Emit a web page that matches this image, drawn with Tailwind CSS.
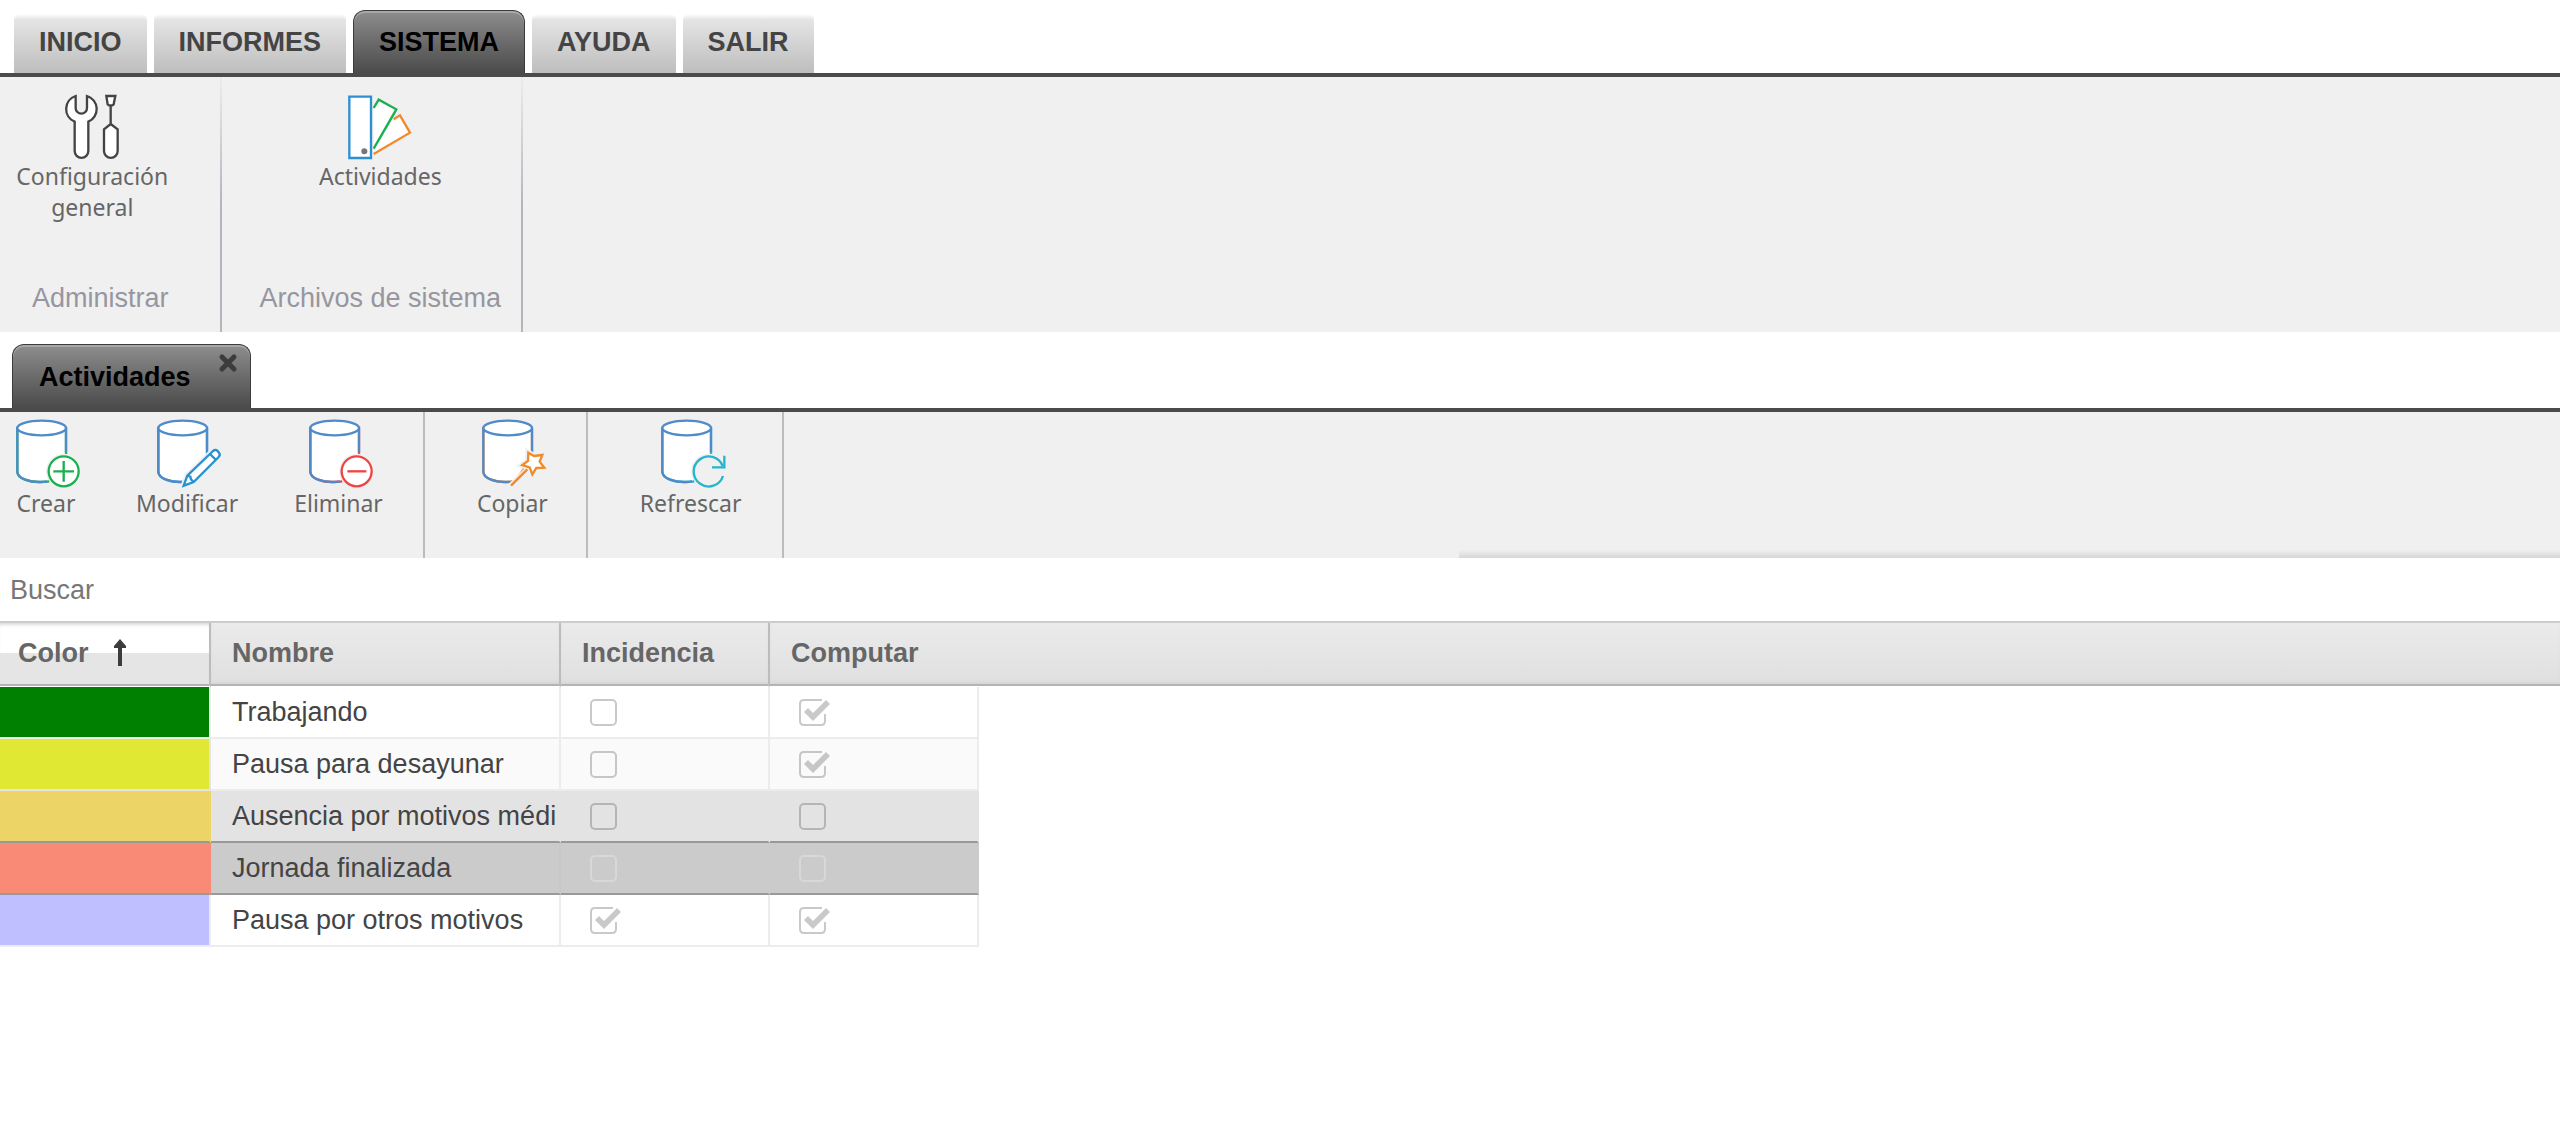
<!DOCTYPE html>
<html lang="es">

<head>
    <meta charset="UTF-8">
    <meta name="viewport" content="width=device-width, initial-scale=1.0">
    <title>Actividades</title>
    <script src="https://cdn.jsdelivr.net/npm/@tailwindcss/browser@4"></script>
</head>

<body class="bg-white font-['Liberation_Sans',Arial,sans-serif] text-[27px] leading-8 text-[#444]">

    <!-- shared icons -->
    <svg class="hidden" aria-hidden="true">
        <symbol id="cylinder" viewBox="0 0 204 204">
            <path d="M16 30V161C16 182 55 193 86 192L110 190L162 120V30Z" fill="#fff" />
            <path d="M16 30V161C16 180 50 193 86 192Q97 192 106 190M162 30V103" fill="none" stroke="#4f8ac9" stroke-width="7" />
            <ellipse cx="89" cy="30" rx="73" ry="22" fill="#fff" stroke="#4f8ac9" stroke-width="7" />
        </symbol>
        <symbol id="unchecked" viewBox="0 0 32 28">
            <rect x="1" y="1" width="25" height="25" rx="4" fill="none" stroke="currentColor" stroke-width="2" />
        </symbol>
        <symbol id="checked" viewBox="0 0 32 28">
            <path d="M23 1H5Q1 1 1 5V22Q1 26 5 26H22Q26 26 26 22V15" fill="none" stroke="currentColor" stroke-width="2" />
            <path d="M6 12L9 9L14 14L27 1L31 5L14 22L5 13Z" fill="currentColor" />
        </symbol>
    </svg>

    <!-- main menu -->
    <nav class="flex items-end gap-[7px] border-b-4 border-[#4b4b4b] pt-2.5 pl-3.5 font-bold">
        <button class="h-[59px] rounded-t-md bg-linear-to-b from-white via-[#e4e4e4] via-10% to-[#bebebe] px-[25px] pb-1">INICIO</button>
        <button class="h-[59px] rounded-t-md bg-linear-to-b from-white via-[#e4e4e4] via-10% to-[#bebebe] px-[25px] pb-1">INFORMES</button>
        <button class="h-[63px] rounded-t-xl border border-b-0 border-[#3c3c3c] bg-linear-to-b from-[#8e8e8e] to-[#4b4b4b] px-[25px] text-black shadow-[inset_0_2px_0_#a8a8a8]">SISTEMA</button>
        <button class="h-[59px] rounded-t-md bg-linear-to-b from-white via-[#e4e4e4] via-10% to-[#bebebe] px-[25px] pb-1">AYUDA</button>
        <button class="h-[59px] rounded-t-md bg-linear-to-b from-white via-[#e4e4e4] via-10% to-[#bebebe] px-[25px] pb-1">SALIR</button>
    </nav>

    <!-- ribbon -->
    <div class="flex h-[255px] bg-[#f0f0f0] text-[#666]">
        <section class="flex flex-col justify-between pt-3.5 pr-[51px] pb-[18px] pl-4">
            <button class="flex flex-col items-center gap-0.5 font-['Noto_Sans',sans-serif] text-[23px] leading-[31px]">
                <svg class="size-[68px] overflow-visible" viewBox="51 33 204 204" fill="#fff" stroke="#444" stroke-width="7">
                    <path d="M104 48V84A17 17 0 0 0 138 84V48A41 41 0 0 1 142 125V213A20 20 0 0 1 101 213V125A41 41 0 0 1 104 48Z" />
                    <path d="M196 48H223L218 73L214 76H204L200 73ZM209 76V132M209 132L230 148V213A20 20 0 0 1 189 213V148Z" />
                </svg>
                <span>Configuración<br>general</span>
            </button>
            <span class="pl-4 text-[#9696a0]">Administrar</span>
        </section>
        <div class="w-0.5 bg-linear-to-b from-[#ececf0] via-[#b4b6be] via-50% to-[#b4b6be]"></div>
        <section class="flex flex-col items-center justify-between pt-3.5 pr-[20px] pb-[18px] pl-[38px]">
            <button class="flex flex-col items-center gap-0.5 font-['Noto_Sans',sans-serif] text-[23px] leading-[31px]">
                <svg class="size-[68px] overflow-visible" viewBox="51 33 204 204" fill="#fff" stroke-width="7">
                    <path d="M194 118L213 106L243 158L134 222V206Z" stroke="none" />
                    <path d="M194 118L213 106L243 158L134 222" fill="none" stroke="#f08a2c" />
                    <path d="M134 84L149 59L202 88L134 206" stroke="#1bb04f" />
                    <path d="M61 50H126V234H61Z" stroke="#2e8fd0" />
                    <circle cx="106" cy="214" r="9" fill="#777" />
                </svg>
                <span>Actividades</span>
            </button>
            <span class="text-[#9696a0]">Archivos de sistema</span>
        </section>
        <div class="w-0.5 bg-linear-to-b from-[#ececf0] via-[#b4b6be] via-50% to-[#b4b6be]"></div>
    </div>

    <!-- open tabs -->
    <div class="flex items-end border-b-4 border-[#4b4b4b] pt-3 pl-3">
        <div class="flex h-16 items-start rounded-t-xl border border-b-0 border-[#3c3c3c] bg-linear-to-b from-[#8e8e8e] to-[#4b4b4b] pr-3 pl-[26px] font-bold text-black shadow-[inset_0_2px_0_#a8a8a8]">
            <a href="#" class="pt-4">Actividades</a>
            <button aria-label="Cerrar" class="pt-2 pl-[27px]">
                <svg class="size-5" viewBox="0 0 20 20" stroke="#3c3c3c" stroke-width="5" stroke-linecap="round">
                    <path d="M4 4L16 16M16 4L4 16" />
                </svg>
            </button>
        </div>
    </div>

    <!-- toolbar -->
    <div class="flex h-[146px] bg-[#f0f0f0] font-['Noto_Sans',sans-serif] text-[23px] leading-[31px] text-[#666]">
        <div class="flex items-start gap-14 border-r-2 border-[#bcbcbc] pt-1.5 pr-10 pl-3">
            <button class="flex flex-col items-center gap-0.5">
                <svg class="size-[68px] overflow-visible" viewBox="0 0 204 204" fill="#fff" stroke="#1bb04f" stroke-width="7">
                    <use href="#cylinder" width="204" height="204" />
                    <circle cx="155" cy="160" r="53" fill="#f0f0f0" stroke="none" />
                    <circle cx="155" cy="160" r="45" />
                    <path d="M124 160H186M155 129V191" />
                </svg>
                <span>Crear</span>
            </button>
            <button class="flex flex-col items-center gap-0.5">
                <svg class="size-[68px] overflow-visible" viewBox="0 0 204 204" fill="#fff" stroke="#2592d4" stroke-width="7">
                    <use href="#cylinder" width="204" height="204" />
                    <path d="M92 203L103 173L180 99Q187 93 194 99L198 104Q203 110 197 117L122 192Z" fill="none" stroke="#f0f0f0" stroke-width="18" />
                    <path d="M92 203L103 173L180 99Q187 93 194 99L198 104Q203 110 197 117L122 192ZM103 173L112 176L114 184L122 192M171 108L188 125" />
                </svg>
                <span>Modificar</span>
            </button>
            <button class="flex flex-col items-center gap-0.5">
                <svg class="size-[68px] overflow-visible" viewBox="0 0 204 204" fill="#fff" stroke="#f04444" stroke-width="7">
                    <use href="#cylinder" width="204" height="204" />
                    <circle cx="155" cy="160" r="53" fill="#f0f0f0" stroke="none" />
                    <circle cx="155" cy="160" r="45" />
                    <path d="M127 160H184" />
                </svg>
                <span>Eliminar</span>
            </button>
        </div>
        <div class="flex items-start border-r-2 border-[#bcbcbc] pt-1.5 pr-[38px] pl-[52px]">
            <button class="flex flex-col items-center gap-0.5">
                <svg class="size-[68px] overflow-visible" viewBox="0 0 204 204" fill="#fff" stroke="#f08a2c" stroke-width="7">
                    <use href="#cylinder" width="204" height="204" />
                    <path d="M151 104L168 114L193 111L185 131L199 149L175 150L163 169L155 148L133 141L150 129ZM152 152L99 203" fill="#f0f0f0" stroke="#f0f0f0" stroke-width="18" />
                    <path d="M151 104L168 114L193 111L185 131L199 149L175 150L163 169L155 148L133 141L150 129ZM148 154L99 203" />
                </svg>
                <span>Copiar</span>
            </button>
        </div>
        <div class="flex items-start border-r-2 border-[#bcbcbc] pt-1.5 pr-[41px] pl-[52px]">
            <button class="flex flex-col items-center gap-0.5">
                <svg class="size-[68px] overflow-visible" viewBox="0 0 204 204" fill="none" stroke="#25b5cc" stroke-width="7">
                    <use href="#cylinder" width="204" height="204" />
                    <circle cx="155" cy="160" r="53" fill="#f0f0f0" stroke="none" />
                    <path d="M198 174A45 45 0 1 1 197 144" />
                    <path d="M202 113V148H165" />
                </svg>
                <span>Refrescar</span>
            </button>
        </div>
        <div class="mt-auto ml-auto h-2 w-[43%] bg-linear-to-b from-[#f0f0f0] to-[#d6d6d6]"></div>
    </div>

    <input type="text" placeholder="Buscar" aria-label="Buscar" class="block h-[65px] w-full border-b-2 border-[#ccc] bg-white px-2.5 pt-0.5 placeholder:text-[#777]">

    <table class="w-full table-fixed border-separate border-spacing-0 text-left whitespace-nowrap">
        <colgroup>
            <col class="w-[211px]">
            <col class="w-[350px]">
            <col class="w-[209px]">
            <col class="w-[209px]">
            <col>
        </colgroup>
        <thead class="text-[#666]">
            <tr class="h-16">
                <th class="border-r-2 border-b border-r-[#bcbcbc] border-b-white bg-linear-to-b from-white from-48% to-[#e5e5e5] to-48% p-0 pb-1 pl-[18px] shadow-[inset_0_-2px_0_#b4b4b4,inset_0_4px_4px_-3px_#ccc]">
                    <div class="flex items-center gap-[25px]">
                        Color
                        <svg class="h-7 w-3" viewBox="0 0 12 28" fill="#3c3c3c">
                            <path d="M6 0L12 7V9H8V27H4V9H0V7Z" />
                        </svg>
                    </div>
                </th>
                <th class="border-r-2 border-b border-r-[#bcbcbc] border-b-white bg-linear-to-b from-[#ebebeb] to-[#dfdfdf] p-0 pb-1 pl-[21px] shadow-[inset_0_-2px_0_#b4b4b4,inset_0_-5px_5px_-3px_#ccc]">Nombre</th>
                <th class="border-r-2 border-b border-r-[#bcbcbc] border-b-white bg-linear-to-b from-[#ebebeb] to-[#dfdfdf] p-0 pb-1 pl-[21px] shadow-[inset_0_-2px_0_#b4b4b4,inset_0_-5px_5px_-3px_#ccc]">Incidencia</th>
                <th colspan="2" class="border-b border-white bg-linear-to-b from-[#ebebeb] to-[#dfdfdf] p-0 pb-1 pl-[21px] shadow-[inset_0_-2px_0_#b4b4b4,inset_0_-5px_5px_-3px_#ccc]">Computar</th>
            </tr>
        </thead>
        <tbody>
            <tr class="h-[52px] text-[#444]">
                <td class="border-r-2 border-b-2 border-[#ececec] bg-[#008000] p-0"></td>
                <td class="overflow-hidden border-r-2 border-b-2 border-[#ececec] p-0 pl-[21px]">Trabajando</td>
                <td class="border-r-2 border-b-2 border-[#ececec] p-0 pt-0.5 pl-[29px] text-[#c9c9c9]">
                    <label class="grid w-8"><input type="checkbox" aria-label="Incidencia" class="col-start-1 row-start-1 h-7 w-8 appearance-none"><svg class="col-start-1 row-start-1 h-7 w-8"><use href="#unchecked" /></svg></label>
                </td>
                <td class="border-r-2 border-b-2 border-[#ececec] p-0 pt-0.5 pl-[29px] text-[#c9c9c9]">
                    <label class="grid w-8"><input type="checkbox" checked aria-label="Computar" class="col-start-1 row-start-1 h-7 w-8 appearance-none"><svg class="col-start-1 row-start-1 h-7 w-8"><use href="#checked" /></svg></label>
                </td>
                <td></td>
            </tr>
            <tr class="h-[52px] text-[#444]">
                <td class="border-r-2 border-b-2 border-[#e4e4e4] bg-[#e0e833] p-0"></td>
                <td class="overflow-hidden border-r-2 border-b-2 border-[#ececec] bg-[#fafafa] p-0 pl-[21px]">Pausa para desayunar</td>
                <td class="border-r-2 border-b-2 border-[#ececec] bg-[#fafafa] p-0 pt-0.5 pl-[29px] text-[#c6c6c6]">
                    <label class="grid w-8"><input type="checkbox" aria-label="Incidencia" class="col-start-1 row-start-1 h-7 w-8 appearance-none"><svg class="col-start-1 row-start-1 h-7 w-8"><use href="#unchecked" /></svg></label>
                </td>
                <td class="border-r-2 border-b-2 border-[#ececec] bg-[#fafafa] p-0 pt-0.5 pl-[29px] text-[#c6c6c6]">
                    <label class="grid w-8"><input type="checkbox" checked aria-label="Computar" class="col-start-1 row-start-1 h-7 w-8 appearance-none"><svg class="col-start-1 row-start-1 h-7 w-8"><use href="#checked" /></svg></label>
                </td>
                <td></td>
            </tr>
            <!-- hovered -->
            <tr class="h-[52px] text-[#444]">
                <td class="border-r-2 border-b-2 border-r-[#edd466] border-b-[#999] bg-[#edd466] p-0"></td>
                <td class="overflow-hidden border-r-2 border-b-2 border-r-[#e3e3e3] border-b-[#999] bg-[#e3e3e3] p-0 pl-[21px]">Ausencia por motivos médi</td>
                <td class="border-r-2 border-b-2 border-r-[#e3e3e3] border-b-[#999] bg-[#e3e3e3] p-0 pt-0.5 pl-[29px] text-[#b5b5b5]">
                    <label class="grid w-8"><input type="checkbox" aria-label="Incidencia" class="col-start-1 row-start-1 h-7 w-8 appearance-none"><svg class="col-start-1 row-start-1 h-7 w-8"><use href="#unchecked" /></svg></label>
                </td>
                <td class="border-r-2 border-b-2 border-r-[#e3e3e3] border-b-[#999] bg-[#e3e3e3] p-0 pt-0.5 pl-[29px] text-[#b5b5b5]">
                    <label class="grid w-8"><input type="checkbox" aria-label="Computar" class="col-start-1 row-start-1 h-7 w-8 appearance-none"><svg class="col-start-1 row-start-1 h-7 w-8"><use href="#unchecked" /></svg></label>
                </td>
                <td></td>
            </tr>
            <!-- selected -->
            <tr class="h-[52px] text-[#444]">
                <td class="border-r-2 border-b-2 border-r-[#f98a76] border-b-[#999] bg-[#f98a76] p-0"></td>
                <td class="overflow-hidden border-r-2 border-b-2 border-r-[#c8c8c8] border-b-[#999] bg-[#cbcbcb] p-0 pl-[21px]">Jornada finalizada</td>
                <td class="border-r-2 border-b-2 border-r-[#cbcbcb] border-b-[#999] bg-[#cbcbcb] p-0 pt-0.5 pl-[29px] text-[#d8d8d8]">
                    <label class="grid w-8"><input type="checkbox" aria-label="Incidencia" class="col-start-1 row-start-1 h-7 w-8 appearance-none"><svg class="col-start-1 row-start-1 h-7 w-8"><use href="#unchecked" /></svg></label>
                </td>
                <td class="border-r-2 border-b-2 border-r-[#cbcbcb] border-b-[#999] bg-[#cbcbcb] p-0 pt-0.5 pl-[29px] text-[#d8d8d8]">
                    <label class="grid w-8"><input type="checkbox" aria-label="Computar" class="col-start-1 row-start-1 h-7 w-8 appearance-none"><svg class="col-start-1 row-start-1 h-7 w-8"><use href="#unchecked" /></svg></label>
                </td>
                <td></td>
            </tr>
            <tr class="h-[52px] text-[#444]">
                <td class="border-r-2 border-b-2 border-[#ececec] bg-[#bfbfff] p-0"></td>
                <td class="overflow-hidden border-r-2 border-b-2 border-[#ececec] p-0 pl-[21px]">Pausa por otros motivos</td>
                <td class="border-r-2 border-b-2 border-[#ececec] p-0 pt-0.5 pl-[29px] text-[#c9c9c9]">
                    <label class="grid w-8"><input type="checkbox" checked aria-label="Incidencia" class="col-start-1 row-start-1 h-7 w-8 appearance-none"><svg class="col-start-1 row-start-1 h-7 w-8"><use href="#checked" /></svg></label>
                </td>
                <td class="border-r-2 border-b-2 border-[#ececec] p-0 pt-0.5 pl-[29px] text-[#c9c9c9]">
                    <label class="grid w-8"><input type="checkbox" checked aria-label="Computar" class="col-start-1 row-start-1 h-7 w-8 appearance-none"><svg class="col-start-1 row-start-1 h-7 w-8"><use href="#checked" /></svg></label>
                </td>
                <td></td>
            </tr>
        </tbody>
    </table>
</body>

</html>
